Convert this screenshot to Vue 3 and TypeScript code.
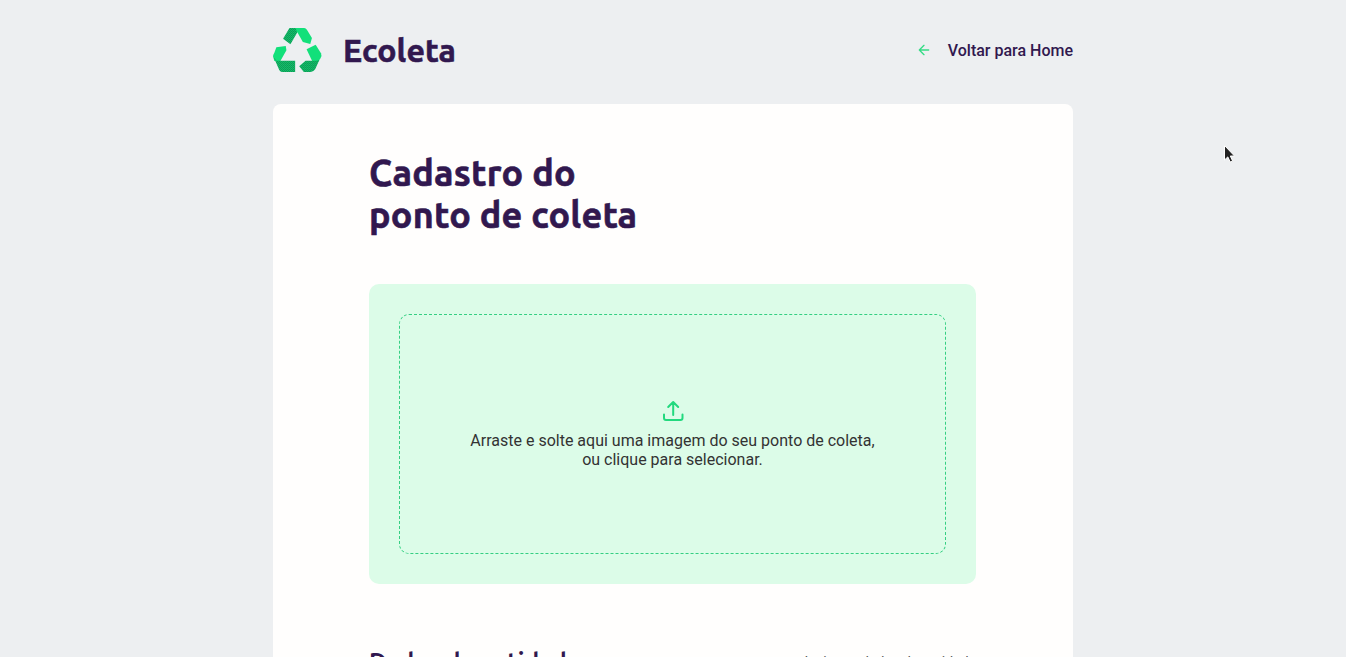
<script setup lang="ts">
const titleLines: string[] = ['Cadastro do', 'ponto de coleta']
const dropHint: string[] = [
  'Arraste e solte aqui uma imagem do seu ponto de coleta,',
  'ou clique para selecionar.',
]
</script>

<template>
  <div class="page">
    <div class="container">
      <header class="top">
        <div class="brand">
          <svg class="logo" viewBox="24 24 146 132" preserveAspectRatio="none" aria-hidden="true">
            <defs>
              <pattern id="hatch" width="6" height="6" patternUnits="userSpaceOnUse">
                <rect width="6" height="6" fill="#17c670" />
                <path d="M0 6L6 0M-1 1L1 -1M5 7L7 5" stroke="#078448" stroke-width="2" />
              </pattern>
            </defs>
            <path d="M73 24H104L76 73L54 56Z" fill="url(#hatch)" />
            <path d="M91 24H117Q122 24 125 29L140 54L135 72L113 66L94 32Z" fill="#12e07a" />
            <path d="M151 74L167 100Q170 107 166 114L155 131L141 124L124 88Z" fill="#12e07a" />
            <path d="M102 139L121 122H154L162 120L150 147Q145 156 136 156H116Z" fill="url(#hatch)" />
            <path d="M34 82L62 78L64 91L46 123H28L24 109Q24 104 28 98Z" fill="#12e07a" />
            <path d="M26 112L34 122H90V156H51Q46 156 43 151Z" fill="url(#hatch)" />
          </svg>
          <span class="brand-name">Ecoleta</span>
        </div>
        <a class="back">
          <svg class="arrow" viewBox="0 0 24 24" aria-hidden="true">
            <path d="M19 12H5M12 19L5 12L12 5" />
          </svg>
          <span class="back-label">Voltar para Home</span>
        </a>
      </header>

      <main class="card">
        <h1 class="title">
          <span v-for="line in titleLines" :key="line">{{ line }}</span>
        </h1>
        <section class="dropzone">
          <div class="drop-inner">
            <svg class="upload" viewBox="0 0 24 24" aria-hidden="true">
              <path d="M3 15.5V19Q3 21 5 21H19.5Q21.5 21 21.5 19V15.5M12.2 16V3M7.2 8L12.2 3L17.2 8" />
            </svg>
            <p class="hint">
              <span v-for="line in dropHint" :key="line">{{ line }}</span>
            </p>
          </div>
        </section>
        <div class="legend">
          <h2>Dados da entidade</h2>
          <span class="note">Insira os dados da entidade</span>
        </div>
      </main>
    </div>
    <svg class="cursor" viewBox="0 0 14 20" aria-hidden="true">
      <path d="M1.5 1.5V16L4.8 12.9L7.2 18L9.6 16.9L7.3 12H11.5Z" />
    </svg>
  </div>
</template>

<style>
html,
body {
  background: #edeff1;
  overflow: hidden;
}
</style>

<style scoped>
.page {
  position: relative;
  height: 657px;
  overflow: hidden;
  background: #edeff1;
  color: #322153;
  font-family: Roboto, sans-serif;
}
.container {
  width: 800px;
  margin: 0 auto;
}
.top {
  display: flex;
  align-items: center;
  justify-content: space-between;
  height: 100px;
  margin-bottom: 4px;
}
.brand {
  display: flex;
  align-items: center;
  gap: 21px;
}
.logo {
  width: 49px;
  height: 44px;
}
.brand-name,
.title,
.legend h2 {
  color: #31184f;
  font-family: Ubuntu, 'Noto Sans', sans-serif;
  font-weight: 700;
  -webkit-text-stroke: 0.6px #31184f;
}
.brand-name {
  font-size: 32px;
  line-height: 44px;
  letter-spacing: 0.15px;
}
.back {
  display: flex;
  align-items: center;
  gap: 16px;
  color: #31184f;
  font-size: 16px;
  font-weight: 500;
  line-height: 20px;
}
.back-label {
  padding-top: 1px;
}
.arrow {
  width: 16px;
  height: 16px;
  fill: none;
  stroke: #34db85;
  stroke-width: 2;
  stroke-linecap: round;
  stroke-linejoin: round;
}
.card {
  box-sizing: border-box;
  height: 700px;
  padding: 48px 97px 0 96px;
  border-radius: 8px;
  background: #fffefd;
}
.title {
  display: flex;
  flex-direction: column;
  margin: 0 0 48px;
  font-size: 36px;
  line-height: 42px;
  letter-spacing: 0.22px;
}
.dropzone {
  box-sizing: border-box;
  height: 300px;
  padding: 30px;
  border-radius: 10px;
  background: #dcfce8;
}
.drop-inner {
  box-sizing: border-box;
  display: flex;
  flex-direction: column;
  align-items: center;
  justify-content: center;
  height: 240px;
  border: 1px dashed #35cf82;
  border-radius: 10px;
}
.upload {
  width: 24px;
  height: 24px;
  margin-bottom: 8px;
  fill: none;
  stroke: #22d97e;
  stroke-width: 2;
  stroke-linecap: round;
  stroke-linejoin: round;
}
.hint {
  display: flex;
  flex-direction: column;
  align-items: center;
  margin: 0;
  color: #333;
  font-size: 16px;
  line-height: 19px;
}
.legend {
  display: flex;
  align-items: center;
  justify-content: space-between;
  margin-top: 64px;
}
.legend h2 {
  margin: 0;
  font-size: 24px;
  line-height: 28px;
  letter-spacing: 0.1px;
  -webkit-text-stroke-width: 0;
}
.note {
  color: #555;
  font-size: 14px;
  line-height: 16px;
}
.cursor {
  position: absolute;
  top: 144px;
  left: 1223px;
  width: 14px;
  height: 20px;
  fill: #222;
  stroke: #fff;
  stroke-width: 1;
}
</style>
